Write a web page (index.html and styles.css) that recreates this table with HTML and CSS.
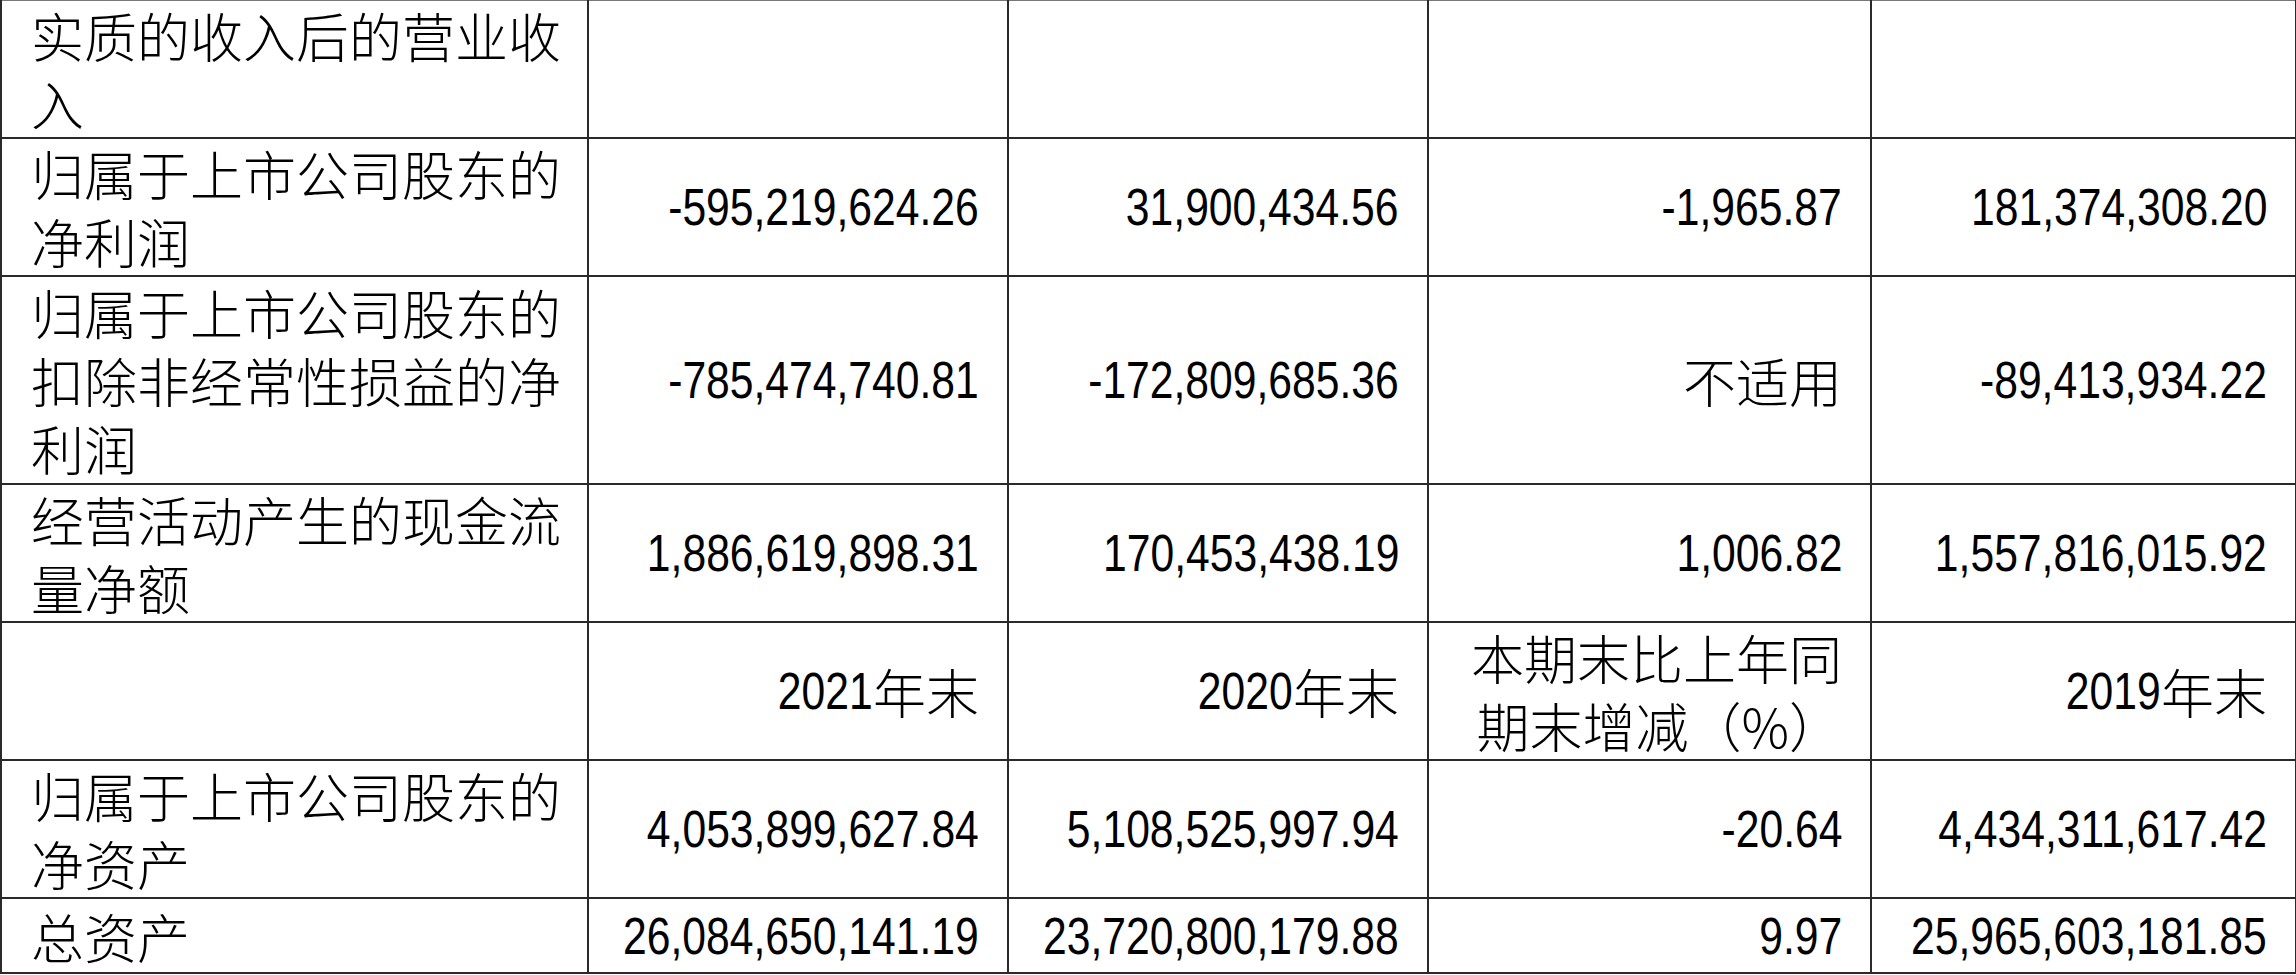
FILE: index.html
```html
<!DOCTYPE html>
<html lang="zh-CN">
<head>
<meta charset="utf-8">
<title>主要会计数据</title>
<link rel="stylesheet" href="styles.css">
</head>
<body>
<table class="fin">
  <colgroup>
    <col class="c-label">
    <col class="c-num">
    <col class="c-num">
    <col class="c-chg">
    <col class="c-num2">
  </colgroup>
  <tbody>
    <tr class="r2">
      <td class="label">实质的收入后的营业收入</td>
      <td></td><td></td><td></td><td></td>
    </tr>
    <tr class="r2">
      <td class="label">归属于上市公司股东的净利润</td>
      <td><span class="n">-595,219,624.26</span></td>
      <td><span class="n">31,900,434.56</span></td>
      <td><span class="n">-1,965.87</span></td>
      <td><span class="n">181,374,308.20</span></td>
    </tr>
    <tr class="r3">
      <td class="label">归属于上市公司股东的扣除非经常性损益的净利润</td>
      <td><span class="n">-785,474,740.81</span></td>
      <td><span class="n">-172,809,685.36</span></td>
      <td>不适用</td>
      <td><span class="n">-89,413,934.22</span></td>
    </tr>
    <tr class="r2 tall">
      <td class="label">经营活动产生的现金流量净额</td>
      <td><span class="n">1,886,619,898.31</span></td>
      <td><span class="n">170,453,438.19</span></td>
      <td><span class="n">1,006.82</span></td>
      <td><span class="n">1,557,816,015.92</span></td>
    </tr>
    <tr class="r2 tall">
      <td class="label"></td>
      <td><span class="n y">2021</span>年末</td>
      <td><span class="n y">2020</span>年末</td>
      <td>本期末比上年同期末增减（%）</td>
      <td><span class="n y">2019</span>年末</td>
    </tr>
    <tr class="r2">
      <td class="label">归属于上市公司股东的净资产</td>
      <td><span class="n">4,053,899,627.84</span></td>
      <td><span class="n">5,108,525,997.94</span></td>
      <td><span class="n">-20.64</span></td>
      <td><span class="n">4,434,311,617.42</span></td>
    </tr>
    <tr class="r1">
      <td class="label">总资产</td>
      <td><span class="n">26,084,650,141.19</span></td>
      <td><span class="n">23,720,800,179.88</span></td>
      <td><span class="n">9.97</span></td>
      <td><span class="n">25,965,603,181.85</span></td>
    </tr>
  </tbody>
</table>
</body>
</html>
```

FILE: styles.css
```css
html, body {
  margin: 0;
  padding: 0;
  background: #ffffff;
}

.fin {
  border-collapse: collapse;
  table-layout: fixed;
  width: 2295px;
  font-family: "Noto Sans CJK SC", sans-serif;
  font-weight: 300;
  font-size: 53px;
  line-height: 68px;
  color: #000000;
}

.c-label { width: 587px; }
.c-num { width: 420px; }
.c-chg { width: 443px; }
.c-num2 { width: 425px; }

.fin td {
  border: 2px solid #2a2a2a;
  padding: 0 28px 0 28px;
  text-align: right;
  vertical-align: middle;
  word-break: break-all;
}

.fin td.label {
  text-align: left;
  padding: 0 18px 0 29px;
}

.fin tr:first-child td {
  border-top: 1px solid #777777;
}

.n {
  display: inline-block;
  vertical-align: top;
  font-family: "Liberation Sans", Arial, sans-serif;
  font-weight: 400;
  font-size: 52px;
  line-height: 68px;
  white-space: nowrap;
  transform: scaleX(0.82);
  transform-origin: 100% 50%;
  margin-left: -200px;
}

.n.y {
  margin-left: -21px;
}

.r1 { height: 75px; }
.r2 { height: 137px; }
.r2.tall { height: 138px; }
.r3 { height: 208px; }
```
